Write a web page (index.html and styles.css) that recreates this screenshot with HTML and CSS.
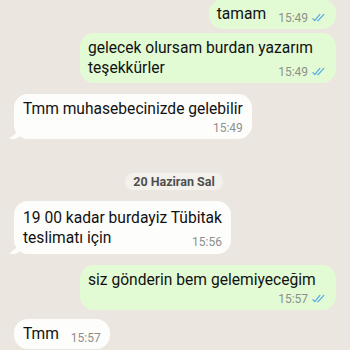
FILE: index.html
```html
<!doctype html>
<html>
<head>
<meta charset="utf-8">
<link rel="stylesheet" href="styles.css">
</head>
<body>
<div class="chat">

	<div class="msg out first">
		<span class="text">tamam</span><span class="meta">15:49 <svg class="ticks" viewBox="0 0 16 10"><path d="M1 6.2l2.2 2.3L9 1.5M6.5 8.5L7 8.5 13.5 1.5"/></svg></span>
	</div>

	<div class="msg out wide same">
		<span class="text">gelecek olursam burdan yazarım<br>teşekkürler</span><span class="meta">15:49 <svg class="ticks" viewBox="0 0 16 10"><path d="M1 6.2l2.2 2.3L9 1.5M6.5 8.5L7 8.5 13.5 1.5"/></svg></span>
	</div>

	<div class="msg in stack tail">
		<div class="text">Tmm muhasebecinizde gelebilir</div>
		<div class="meta">15:49</div>
	</div>

	<div class="day"><span>20 Haziran Sal</span></div>

	<div class="msg in tail">
		<span class="text">19 00 kadar burdayiz Tübitak<br>teslimatı için</span><span class="meta">15:56</span>
	</div>

	<div class="msg out wide stack">
		<div class="text">siz gönderin bem gelemiyeceğim</div>
		<div class="meta">15:57 <svg class="ticks" viewBox="0 0 16 10"><path d="M1 6.2l2.2 2.3L9 1.5M6.5 8.5L7 8.5 13.5 1.5"/></svg></div>
	</div>

	<div class="msg in near">
		<span class="text">Tmm</span><span class="meta">15:57</span>
	</div>

</div>
</body>
</html>
```

FILE: styles.css
```css
body{
	margin:0px;
	padding:0px;
	background:#ebe6df;
	font-family:Roboto, "Liberation Sans", Arial, sans-serif;
	overflow:hidden;
	height:350px;
}

.chat{
	display:flex;
	flex-direction:column;
	padding:0px 14px 0px 14px;
	margin-top:-1px;
}

.msg{
	position:relative;
	display:flow-root;
	max-width:256px;
	box-sizing:border-box;
	padding:5px 9px 4px 9px;
	border-radius:14px;
	font-size:15.6px;
	line-height:20px;
	color:#111;
	margin-top:11px;
}

.msg .text{
	white-space:nowrap;
}

.msg.out{
	align-self:flex-end;
	background:#e2fbd4;
	padding-left:8px;
	padding-right:10px;
}

.msg.in{
	align-self:flex-start;
	background:#fdfdfc;
}

.msg.first{
	margin-top:0px;
}

.msg.same{
	margin-top:4px;
}

.msg.near{
	margin-top:9px;
}

.msg.wide{
	width:256px;
}

.meta{
	float:right;
	margin:7px 0px 0px 12px;
	font-size:12px;
	line-height:14px;
	color:#8d8f8c;
	white-space:nowrap;
}

.msg.stack .meta{
	float:none;
	margin:2px 0px 0px 0px;
	text-align:right;
}

.ticks{
	width:14px;
	height:9px;
	margin-left:1px;
	fill:none;
	stroke:#4fa6ea;
	stroke-width:1.3;
	stroke-linecap:round;
	stroke-linejoin:round;
}

.msg.tail::before{
	content:"";
	position:absolute;
	left:-5px;
	bottom:0px;
	width:14px;
	height:12px;
	background:#fdfdfc;
	border-bottom-right-radius:10px 12px;
	clip-path:polygon(0 100%, 100% 0, 100% 100%);
}

.day{
	display:flex;
	justify-content:center;
	margin-top:34px;
}

.day span{
	background:#f4f1ec;
	color:#4f4f4f;
	font-size:12.5px;
	font-weight:bold;
	line-height:17px;
	padding:0px 8px;
	border-radius:8px;
	margin-left:-2px;
}

.day + .msg{
	margin-top:11px;
	padding-top:7px;
	padding-bottom:5px;
}
```
